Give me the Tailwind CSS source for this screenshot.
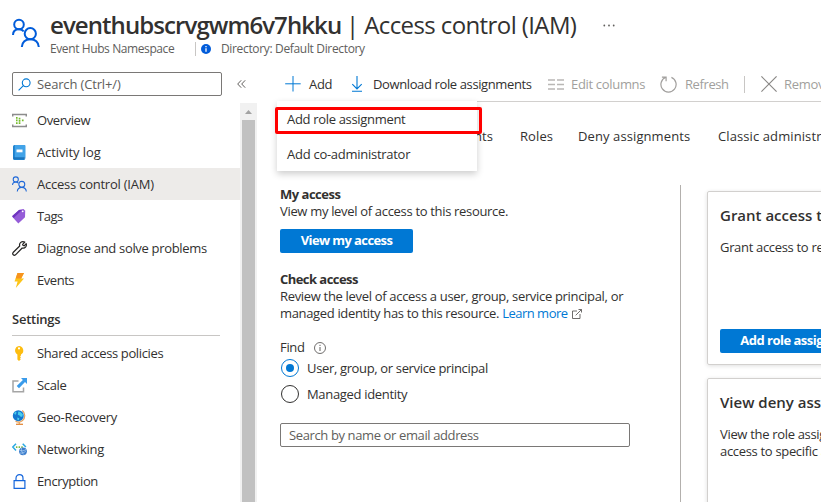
<!DOCTYPE html>
<html lang="en">
<head>
<meta charset="utf-8">
<title>Access control (IAM)</title>
<script src="https://cdn.jsdelivr.net/npm/@tailwindcss/browser@4"></script>
</head>
<body class="w-[821px] h-[502px] overflow-hidden bg-white text-[#323130] font-['Open_Sans','Noto_Sans',sans-serif] text-[13px] leading-[17px] tracking-[-0.32px] whitespace-nowrap">
<svg class="hidden">
  <symbol id="people" viewBox="0 0 28 30"><g fill="none" stroke="currentColor" stroke-width="2"><circle cx="7" cy="6.5" r="4.8"/><path d="M1 17c0-3.600 2.500-5.700 6-5.700 2 0 3.600.7 4.700 2"/><circle cx="18.300" cy="15.700" r="5.600"/><path d="M9.800 29c.5-4.700 3.700-7.700 8.500-7.700s8 3 8.500 7.700"/></g></symbol>
</svg>
<div class="flex flex-col h-full">
  <header class="flex h-[72px] pl-3 pt-[9px] shrink-0">
    <svg class="w-[28px] h-[30px] mt-[9px] text-[#015cda]"><use href="#people"/></svg>
    <div class="ml-[10px]">
      <h1 class="flex items-center h-[32px] text-[24px] leading-[32px]"><span class="font-semibold tracking-[-0.92px] w-[296px]">eventhubscrvgwm6v7hkku</span><span class="tracking-[-0.6px] w-[231px]">| Access control (IAM)</span>
        <svg class="w-[12px] h-[3px] ml-[26px]" viewBox="0 0 12 3" fill="#605e5c"><circle cx="1.300" cy="1.500" r=".9"/><circle cx="6" cy="1.500" r=".9"/><circle cx="10.700" cy="1.500" r=".9"/></svg></h1>
      <div class="flex items-center h-[16px] text-[12px] leading-[16px] text-[#605e5c]">
        <span class="w-[145px] tracking-[-0.4px]">Event Hubs Namespace</span><span class="w-px h-[14px] bg-[#c8c6c4]"></span>
        <svg class="w-[10px] h-[10px] ml-[5px]" viewBox="0 0 10 10"><circle cx="5" cy="5" r="5" fill="#015cda"/><path d="M5 4.200v3.600M5 2v1.200" stroke="#fff" stroke-width="1.300"/></svg>
        <span class="ml-[10px] tracking-[-0.34px]">Directory: Default Directory</span>
      </div>
    </div>
  </header>

  <div class="flex flex-1 min-h-0">
    <aside class="w-[257px] flex flex-col shrink-0">
      <div class="flex items-center h-[24px] pl-3 shrink-0">
        <div class="w-[210px] h-[24px] border border-[#7a7876] rounded-[2px] flex items-center pl-[5px] text-[#605e5c]">
          <svg class="w-[13px] h-[13px] mr-[6px]" viewBox="0 0 13 13" fill="none" stroke="#0078d4" stroke-width="1.100"><circle cx="8.200" cy="4.800" r="3.900"/><path d="M5.400 7.600L.6 12.400"/></svg><span class="tracking-[-0.15px]">Search (Ctrl+/)</span>
        </div>
        <svg class="w-[9px] h-[8px] ml-[15px]" viewBox="0 0 9 8" fill="none" stroke="#605e5c"><path d="M4.200.3L.7 4l3.500 3.700M8.200.3L4.700 4l3.500 3.700"/></svg>
      </div>
      <div class="flex flex-1 min-h-0 mt-[7px]">
        <nav class="w-[240px] pt-px">
          <div class="flex items-center h-8 pl-3 gap-[10px]"><svg class="w-[15px] h-[15px]" viewBox="0 0 15 15"><path d="M.7 3.500V1.500h13.600v2M.7 11.500v2h13.600v-2" fill="none" stroke="#8c8c8c" stroke-width="1.500"/><g fill="#76bc2d"><path d="M4 4h1.600v1.700H4zM4 6.600h1.600v1.700H4zM4 9.200h1.600v1.700H4zM6.700 4.700h1.700v1.700H6.700zM6.700 7h1.700v1.700H6.700zM6.700 9.300h1.700v1.600H6.700zM9.900 6.600h1.700v1.700H9.900z"/></g></svg><span class="tracking-[-0.4px]">Overview</span></div>
          <div class="flex items-center h-8 pl-3 gap-[10px]"><svg class="w-[15px] h-[15px]" viewBox="0 0 15 15"><path d="M2.500 0h10.200v15H2.500A1.500 1.500 0 0 1 1 13.500v-12A1.500 1.500 0 0 1 2.500 0z" fill="#1d80cc"/><path d="M2.800 0h9.700a1 1 0 0 1 1 1v11.500H2.800z" fill="#42a3e8"/><path d="M1.500 13h12" stroke="#1764ab" stroke-width=".8"/><path d="M4.500 4.500h6v2.800h-6z" fill="#fff"/></svg><span class="tracking-[-0.1px]">Activity log</span></div>
          <div class="flex items-center h-8 pl-3 gap-[10px] bg-[#edebe9]"><svg class="w-[15px] h-[16px] text-[#1f68d8]"><use href="#people"/></svg><span class="tracking-[-0.23px]">Access control (IAM)</span></div>
          <div class="flex items-center h-8 pl-3 gap-[10px]"><svg class="w-[15px] h-[15px]" viewBox="0 0 15 15"><path d="M7.300.8L11.500 0l1.700 1.700-.2 6.500L6.300 14.500 0 7.500z" fill="#955cd8"/><path d="M.2 7L7 .9l3 .1-8.300 8z" fill="#6f35bf"/><circle cx="10.700" cy="2.300" r=".9" fill="#fff"/></svg><span class="tracking-[-0.45px]">Tags</span></div>
          <div class="flex items-center h-8 pl-3 gap-[10px]"><svg class="w-[15px] h-[15px]" viewBox="0 0 15 15" fill="none" stroke="#252423" stroke-width="1.200" stroke-linejoin="round"><path d="M12.800 1.100L10.600 3.300l.4 1.100 1.200.4 2-2.100c.8 2.700-1.200 5-4 4.300L3.500 13.800c-1.600 1.300-3.600-.6-2.400-2.300L7.700 5c-.8-3 1.900-5.300 5.100-3.900z"/></svg><span>Diagnose and solve problems</span></div>
          <div class="flex items-center h-8 pl-3 gap-[10px]"><svg class="w-[15px] h-[15px]" viewBox="0 0 15 15"><path d="M5.500 0H12L9.200 5.400H12L3.800 15l1.800-6.500H2.500z" fill="#fcc419"/><path d="M5.500 0H12L9.200 5.400H3.700z" fill="#f7931e"/></svg><span class="tracking-[-0.45px]">Events</span></div>
          <div class="ml-3 mr-5 h-[40px] mb-[1px] border-b border-[#c8c6c4] flex items-end pb-[7px] font-semibold tracking-[-0.25px]">Settings</div>
          <div class="flex items-center h-8 pl-3 gap-[10px]"><svg class="w-[15px] h-[15px]" viewBox="0 0 15 15"><path fill-rule="evenodd" d="M7 0a4.500 4.500 0 0 1 2 8.400v1l-1 .9 1 1-1 1 .8.900L7 15l-1.600-1.500V8.400A4.500 4.500 0 0 1 7 0zm0 1.300a1 1 0 1 0 0 2.200 1 1 0 0 0 0-2.200z" fill="#fdbd10"/></svg><span class="tracking-[-0.37px]">Shared access policies</span></div>
          <div class="flex items-center h-8 pl-3 gap-[10px]"><svg class="w-[15px] h-[15px]" viewBox="0 0 15 15"><path d="M6.500 3H1v10.800h10.500V9.500" fill="none" stroke="#a5a5a5" stroke-width="1.500"/><path d="M9 0h6v6l-2-2-6 6.200L4.700 8l6.200-6z" fill="#3a9bea"/></svg><span>Scale</span></div>
          <div class="flex items-center h-8 pl-3 gap-[10px]"><svg class="w-[15px] h-[15px]" viewBox="0 0 15 15"><path d="M10.300.5c3.200 2.500 3.300 7.500.2 10-1.900 1.700-4.800 2-7 .8M7.300 12v2" fill="none" stroke="#e8a35d" stroke-width="1.200"/><path d="M4 14.300h7" stroke="#e38a3a" stroke-width="1.300"/><circle cx="6.300" cy="5.700" r="5.500" fill="#1477cf"/><path d="M6.300 1.600l2 .3 2.600 2.300-.5 2.300-1.500.5-1.300-1.500-1.800-.7zM2 3l2-1.500.5 1.400L3.200 5zM5.300 7.500l2 .8-.5 1.900-1.500-.5z" fill="#48cdea"/></svg><span>Geo-Recovery</span></div>
          <div class="flex items-center h-8 pl-3 gap-[10px]"><svg class="w-[15px] h-[15px]" viewBox="0 0 15 15"><path d="M4 1.700L.8 5.100 4 8.500M10.700 1.700l3.200 3.400" fill="none" stroke="#2baae2" stroke-width="1.500"/><g fill="#6cb52d"><circle cx="4.700" cy="5.100" r=".9"/><circle cx="7.300" cy="5.100" r=".9"/><circle cx="10" cy="5.100" r=".9"/></g><circle cx="11" cy="9.300" r="3.900" fill="#3b7dcc"/><path d="M7.700 8.300c2 1 4.500.7 6.200-1M8 11c2 .5 4.500-.3 6-2.300M9.500 6c-.5 2.500.5 5 2.500 6.700" fill="none" stroke="#b8d5f3" stroke-width=".7"/></svg><span>Networking</span></div>
          <div class="flex items-center h-8 pl-3 gap-[10px]"><svg class="w-[15px] h-[15px]" viewBox="0 0 15 15" fill="none" stroke="#1566dc" stroke-width="1.200"><path d="M2.100 6.600h10.800v7.700H2.100zM4 6.500V4.200C4 2 5.500.7 7.500.7S11 2 11 4.200v2.300"/></svg><span class="tracking-[-0.4px]">Encryption</span></div>
        </nav>
        <div class="w-[17px] bg-[#f1f1f1] flex flex-col items-center"><svg class="w-[7px] h-[4px] mt-[7px] mb-[6px] shrink-0" viewBox="0 0 7 4"><path d="M0 4L3.500 0 7 4z" fill="#a3a3a3"/></svg><div class="w-[13px] flex-1 bg-[#c1c1c1]"></div></div>
      </div>
    </aside>

    <main class="flex-1 min-w-0 flex flex-col overflow-hidden relative">
      <div class="ml-[20px] h-[30px] pb-[5px] border-b border-[#d2d0ce] flex items-center shrink-0">
        <svg class="w-[16px] h-[16px] ml-[8px] mr-[8px] shrink-0" viewBox="0 0 16 16"><path d="M8 0v15.500M.2 7.800h15.500" stroke="#0078d4" stroke-width="1"/></svg><span class="w-[42px] shrink-0">Add</span>
        <svg class="w-[12px] h-[16px] mr-[10px] shrink-0" viewBox="0 0 12 16" fill="none" stroke="#0078d4" stroke-width="1.100"><path d="M6 0v13M1.300 8.200L6 12.900l4.700-4.700M1 15.200h10"/></svg><span class="w-[175px] shrink-0 tracking-[-0.38px]">Download role assignments</span>
        <svg class="w-[16px] h-[11px] mr-[7px] shrink-0" viewBox="0 0 16 11"><path d="M0 1h7M9 1h7M0 5.500h7M9 5.500h7M0 10h7M9 10h7" stroke="#b9b7b5" stroke-width="1.300"/></svg><span class="w-[89px] text-[#a19f9d] shrink-0">Edit columns</span>
        <svg class="w-[17px] h-[17px] mr-[8px] shrink-0" viewBox="0 0 17 17" fill="none" stroke="#a19f9d" stroke-width="1.200"><path d="M11.400 1.400a7.600 7.600 0 1 1-5.500-.1M1.900 1.100h4.200v4.200"/></svg><span class="w-[59px] text-[#a19f9d] shrink-0 tracking-[-0.4px]">Refresh</span>
        <span class="w-px h-[17px] bg-[#c8c6c4] shrink-0"></span>
        <svg class="w-[16px] h-[16px] ml-[16px] mr-[7px] shrink-0" viewBox="0 0 16 16"><path d="M.4.400l15.200 15.200M15.600.400L.4 15.600" stroke="#8a8886" stroke-width="1.200"/></svg><span class="text-[#a19f9d]">Remove</span>
      </div>
      <div class="flex items-center h-[68px] shrink-0 tracking-[0.1px]">
        <span class="ml-[23px] w-[105px] shrink-0">Check access</span><span class="w-[108px] text-right mr-[27px] shrink-0">Role assignments</span><span class="w-[58px] shrink-0">Roles</span><span class="w-[140px] shrink-0">Deny assignments</span><span>Classic administrators</span>
      </div>
      <div class="flex flex-1 min-h-0 pt-[15px]">
        <section class="w-[423px] pl-[23px] shrink-0">
          <h2 class="font-bold mt-[1px] tracking-[-0.5px]">My access</h2>
          <p>View my level of access to this resource.</p>
          <button class="mt-[9px] w-[133px] h-[24px] pb-px bg-[#0078d4] text-white font-bold rounded-[2px] flex items-center justify-center tracking-[-0.6px]">View my access</button>
          <h2 class="font-bold mt-[18px] tracking-[-0.55px]">Check access</h2>
          <p>Review the level of access a user, group, service principal, or</p>
          <p class="flex items-center tracking-[-0.34px]">managed identity has to this resource.&nbsp;<a class="text-[#0078d4] tracking-[-0.5px]">Learn more</a><svg class="w-[10px] h-[10px] ml-[4px]" viewBox="0 0 10 10" fill="none" stroke="#605e5c" stroke-width=".9"><path d="M5 2H.5v7.500H8V5M6.500.5h3v3M9.500.5L3.700 6.300"/></svg></p>
          <div class="flex items-center mt-[17px]"><span class="w-[34px]">Find</span><svg class="w-[12px] h-[12px] mt-px" viewBox="0 0 12 12" fill="none" stroke="#605e5c"><circle cx="6" cy="6" r="5.500" stroke-width=".9"/><path d="M6 5v4M6 2.800v1.200"/></svg></div>
          <label class="flex items-center h-[18px] mt-[3px] tracking-[-0.35px]"><span class="w-[18px] h-[18px] mr-[8px] ml-[1px] rounded-full border border-[#0078d4] flex items-center justify-center"><span class="w-[8px] h-[8px] rounded-full bg-[#0078d4]"></span></span>User, group, or service principal</label>
          <label class="flex items-center h-[18px] mt-[8px]"><span class="w-[18px] h-[18px] mr-[8px] ml-[1px] rounded-full border border-[#323130]"></span>Managed identity</label>
          <div class="mt-[20px] w-[350px] h-[24px] border border-[#7a7876] rounded-[2px] flex items-center pl-[8px] text-[#605e5c] tracking-[-0.38px]">Search by name or email address</div>
        </section>
        <section class="w-[300px] shrink-0 border-l border-[#b3b0ad] pl-[26px] pt-[6px]">
          <div class="h-[174px] w-[300px] border border-[#d2d0ce] rounded-[2px] shadow-[0_1px_4px_rgba(0,0,0,0.13)] pl-3 pt-[13px]">
            <h3 class="text-[15px] leading-[20px] font-semibold tracking-[0px]">Grant access to this resource</h3>
            <p class="mt-[14px]">Grant access to resources by assigning a role.</p>
            <button class="mt-[73px] w-[164px] h-[24px] pb-px bg-[#0078d4] text-white font-bold rounded-[2px] flex items-center justify-center tracking-[-0.5px]">Add role assignment</button>
          </div>
          <div class="h-[174px] w-[300px] mt-[13px] border border-[#d2d0ce] rounded-[2px] shadow-[0_1px_4px_rgba(0,0,0,0.13)] pl-3 pt-[13px]">
            <h3 class="text-[15px] leading-[20px] font-semibold tracking-[0px]">View deny assignments</h3>
            <p class="mt-[14px]">View the role assignments that are denied<br>access to specific actions at this scope.</p>
          </div>
        </section>
      </div>
      <div class="absolute left-[20px] top-[29px] w-[200px] h-[70px] bg-white shadow-[0_3px_7px_rgba(0,0,0,0.2)] pl-[10px] pt-[1px]">
        <div class="h-[35px] flex items-center">Add role assignment</div>
        <div class="h-[34px] flex items-center tracking-[-0.27px]">Add co-administrator</div>
        <div class="absolute left-[-2px] top-[6px] w-[207px] h-[27px] border-[3px] border-[#f00] rounded-[2px]"></div>
      </div>
    </main>
  </div>
</div>
</body>
</html>
